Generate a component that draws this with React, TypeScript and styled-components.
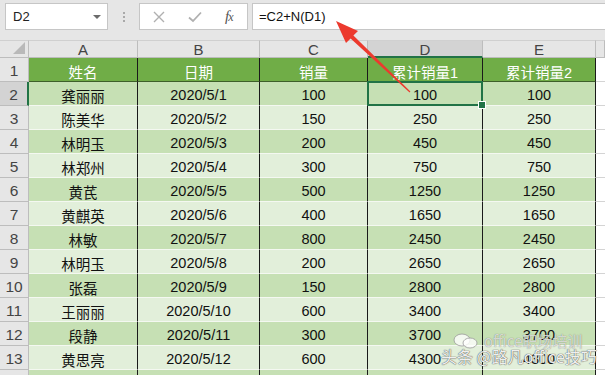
import React from "react";
import styled, { createGlobalStyle, css } from "styled-components";

const Global = createGlobalStyle`
  html, body { margin: 0; padding: 0; background: #ffffff; overflow: hidden; }
  * { box-sizing: border-box; }
  #root { width: 605px; height: 375px; }
`;

const Page = styled.div`
  position: relative;
  width: 605px;
  height: 375px;
  overflow: hidden;
  font-family: "Liberation Sans", "Noto Sans CJK SC", sans-serif;
  background: #ffffff;
`;

const TopBar = styled.div`
  height: 40px;
  background: #e6e6e6;
  display: flex;
  align-items: flex-start;
  padding: 3px 0 0 5px;
`;

const NameBox = styled.div`
  width: 103px;
  height: 27px;
  background: #fff;
  border: 1px solid #c6c6c6;
  display: flex;
  align-items: center;
  justify-content: space-between;
  padding: 0 6px 0 7px;
  font-size: 13px;
  color: #222;
`;

const DropArrow = styled.span`
  width: 0;
  height: 0;
  border-left: 4px solid transparent;
  border-right: 4px solid transparent;
  border-top: 4px solid #6b6b6b;
`;

const Dots = styled.div`
  width: 31px;
  height: 27px;
  display: flex;
  flex-direction: column;
  align-items: center;
  justify-content: center;
  gap: 2px;
  & > span {
    width: 2px;
    height: 2px;
    background: #a9a9a9;
  }
`;

const FxBox = styled.div`
  width: 109px;
  height: 27px;
  background: #fff;
  border: 1px solid #c6c6c6;
  display: flex;
  align-items: center;
  padding-left: 13px;
  gap: 23px;
`;

const FxText = styled.span`
  font-family: "Liberation Serif", serif;
  font-style: italic;
  font-size: 15px;
  color: #555;
  letter-spacing: -1px;
  & > small { font-size: 12px; }
`;

const FormulaBox = styled.div`
  flex: 1;
  margin-left: 4px;
  height: 27px;
  background: #fff;
  border: 1px solid #c6c6c6;
  border-right: none;
  display: flex;
  align-items: center;
  padding-left: 6px;
  font-size: 13px;
  color: #111;
`;

const Grid = styled.div`
  display: grid;
  grid-template-columns: 29px 109px 122px 108px 115px 113px 1fr;
  grid-template-rows: 18px repeat(14, 24px);
`;

const Corner = styled.div`
  background: #e6e6e6;
  border-top: 1px solid #d0d0d0;
  border-right: 1px solid #bdbdbd;
  border-bottom: 1px solid #bdbdbd;
  position: relative;
  &::after {
    content: "";
    position: absolute;
    right: 3px;
    bottom: 3px;
    width: 0;
    height: 0;
    border-left: 12px solid transparent;
    border-bottom: 12px solid #b9b9b9;
  }
`;

const ColHead = styled.div<{ $active?: boolean }>`
  background: ${(p) => (p.$active ? "#d3d3d3" : "#e6e6e6")};
  border-top: 1px solid #d0d0d0;
  border-right: 1px solid #bdbdbd;
  border-bottom: ${(p) => (p.$active ? "2px solid #217346" : "1px solid #bdbdbd")};
  display: flex;
  align-items: center;
  justify-content: center;
  font-size: 15px;
  color: #444;
  padding-top: 1px;
`;

const RowHead = styled.div<{ $active?: boolean }>`
  background: ${(p) => (p.$active ? "#d3d3d3" : "#e6e6e6")};
  border-right: ${(p) => (p.$active ? "2px solid #217346" : "1px solid #bdbdbd")};
  border-bottom: 1px solid #bdbdbd;
  display: flex;
  align-items: flex-end;
  justify-content: center;
  padding-bottom: 1px;
  font-size: 15.5px;
  color: #444;
`;

type Tone = "head" | "dark" | "light" | "blank";

const toneBg: Record<Tone, string> = {
  head: "#70ad47",
  dark: "#c6e0b4",
  light: "#e2efda",
  blank: "#ffffff",
};

const Cell = styled.div<{ $tone: Tone; $selected?: boolean }>`
  position: relative;
  background: ${(p) => toneBg[p.$tone]};
  color: ${(p) => (p.$tone === "head" ? "#ffffff" : "#111")};
  font-size: 14.5px;
  display: flex;
  align-items: center;
  justify-content: center;
  padding-top: 3px;
  ${(p) =>
    p.$tone === "blank"
      ? css`
          border-bottom: 1px solid #d4d4d4;
        `
      : css`
          border-right: 1px solid #1a1a1a;
          border-bottom: 1px solid ${p.$tone === "head" ? "#3d5f2a" : "#f4f8f1"};
        `}
  ${(p) =>
    p.$selected &&
    css`
      &::before {
        content: "";
        position: absolute;
        left: -1px;
        top: -1px;
        right: -1px;
        bottom: -1px;
        border: 2px solid #217346;
      }
      &::after {
        content: "";
        position: absolute;
        right: -4px;
        bottom: -4px;
        width: 6px;
        height: 6px;
        background: #217346;
        border: 1px solid #fff;
        z-index: 2;
      }
    `}
`;

const Overlay = styled.svg`
  position: absolute;
  left: 0;
  top: 0;
  pointer-events: none;
`;

const Watermark = styled.div`
  position: absolute;
  left: 440px;
  top: 332px;
  width: 165px;
  height: 38px;
  pointer-events: none;
  font-family: "Noto Sans CJK SC", sans-serif;
`;

const WmTop = styled.div`
  position: absolute;
  left: 13px;
  top: 0;
  display: flex;
  align-items: center;
  gap: 5px;
  font-size: 15px;
  line-height: 18px;
  color: rgba(255, 255, 255, 0.7);
  text-shadow: 0 0 1px rgba(80, 80, 80, 0.8);
  white-space: nowrap;
`;

const WmBottom = styled.div`
  position: absolute;
  left: 1px;
  top: 14px;
  font-size: 16px;
  line-height: 20px;
  color: rgba(255, 255, 255, 0.92);
  text-shadow: 0 0 1px #555, 0 0 1px #555;
  white-space: nowrap;
`;

const headers = ["姓名", "日期", "销量", "累计销量1", "累计销量2"];
const rows: [string, string, number, number, number][] = [
  ["龚丽丽", "2020/5/1", 100, 100, 100],
  ["陈美华", "2020/5/2", 150, 250, 250],
  ["林明玉", "2020/5/3", 200, 450, 450],
  ["林郑州", "2020/5/4", 300, 750, 750],
  ["黄芪", "2020/5/5", 500, 1250, 1250],
  ["黄麒英", "2020/5/6", 400, 1650, 1650],
  ["林敏", "2020/5/7", 800, 2450, 2450],
  ["林明玉", "2020/5/8", 200, 2650, 2650],
  ["张磊", "2020/5/9", 150, 2800, 2800],
  ["王丽丽", "2020/5/10", 600, 3400, 3400],
  ["段静", "2020/5/11", 300, 3700, 3700],
  ["黄思亮", "2020/5/12", 600, 4300, 4300],
];
const cols = ["A", "B", "C", "D", "E"];

export default function App() {
  return (
    <Page>
      <Global />
      <TopBar>
        <NameBox>
          <span>D2</span>
          <DropArrow />
        </NameBox>
        <Dots>
          <span />
          <span />
          <span />
        </Dots>
        <FxBox>
          <svg width="12" height="12" viewBox="0 0 12 12">
            <path d="M1 1 L11 11 M11 1 L1 11" stroke="#b0b0b0" strokeWidth="1.4" fill="none" />
          </svg>
          <svg width="14" height="12" viewBox="0 0 14 12">
            <path d="M1 6.5 L5 10 L13 1.5" stroke="#b0b0b0" strokeWidth="1.8" fill="none" />
          </svg>
          <FxText>
            f<small>x</small>
          </FxText>
        </FxBox>
        <FormulaBox>=C2+N(D1)</FormulaBox>
      </TopBar>
      <Grid>
        <Corner />
        {cols.map((c) => (
          <ColHead key={c} $active={c === "D"}>
            {c}
          </ColHead>
        ))}
        <ColHead />
        <RowHead>1</RowHead>
        {headers.map((h) => (
          <Cell key={h} $tone="head">
            {h}
          </Cell>
        ))}
        <Cell $tone="blank" />
        {rows.map((r, i) => {
          const tone: Tone = i % 2 === 0 ? "dark" : "light";
          return (
            <React.Fragment key={i}>
              <RowHead $active={i === 0}>{i + 2}</RowHead>
              {r.map((v, j) => (
                <Cell key={j} $tone={tone} $selected={i === 0 && j === 3}>
                  {v}
                </Cell>
              ))}
              <Cell $tone="blank" />
            </React.Fragment>
          );
        })}
        <RowHead />
        {cols.map((c) => (
          <Cell key={c} $tone="dark" />
        ))}
        <Cell $tone="blank" />
      </Grid>
      <Overlay width="605" height="375" viewBox="0 0 605 375">
        <polygon
          points="336,21 358,31 353.4,35.5 410.4,91.6 409.6,92.4 350.6,38.5 346,43"
          fill="#ec3a2e"
        />
      </Overlay>
      <Watermark>
        <WmTop>
          <svg width="26" height="16" viewBox="0 0 26 16">
            <ellipse cx="9" cy="7" rx="8" ry="6" fill="rgba(255,255,255,0.8)" stroke="#999" strokeWidth="0.8" />
            <ellipse cx="17" cy="10" rx="7" ry="5" fill="rgba(255,255,255,0.8)" stroke="#999" strokeWidth="0.8" />
          </svg>
          <span>office职场培训</span>
        </WmTop>
        <WmBottom>头条 @路凡office技巧</WmBottom>
      </Watermark>
    </Page>
  );
}
